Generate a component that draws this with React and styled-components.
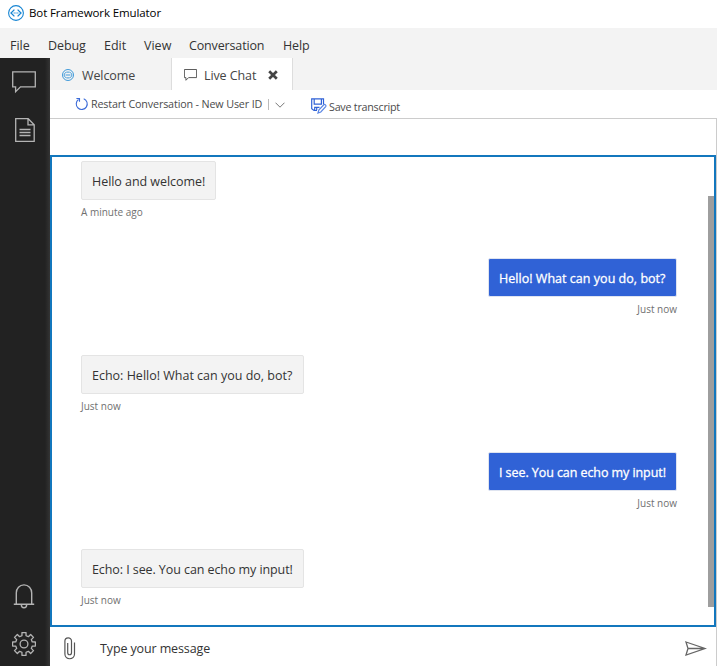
import React from "react";
import styled, { createGlobalStyle } from "styled-components";

const Global = createGlobalStyle`
  * { box-sizing: border-box; }
  html, body, #root { margin: 0; height: 100%; }
  body { font-family: "Open Sans", "Noto Sans", sans-serif; background: #fff; overflow: hidden; }
  svg { display: block; flex: none; }
`;

const Window = styled.div`
  width: 717px;
  height: 666px;
  display: flex;
  flex-direction: column;
  background: #fff;
`;

const Text = styled.span`
  font-size: ${(p) => p.$size || 12.5}px;
  letter-spacing: ${(p) => p.$track || 0}px;
  line-height: 18px;
  white-space: nowrap;
`;

const TitleBar = styled.header`
  height: 28px;
  flex: none;
  display: flex;
  align-items: center;
  gap: 5px;
  padding: 0 0 3px 8px;
  color: #000;
`;

const MenuBar = styled.nav`
  height: 30px;
  flex: none;
  display: flex;
  background: #f3f3f3;
  color: #333;
  padding: 9px 0 0 10px;
`;

const MenuItem = styled(Text)`
  width: ${(p) => p.$width}px;
`;

const Body = styled.div`
  flex: 1;
  display: flex;
  min-height: 0;
`;

const SideBar = styled.aside`
  width: 50px;
  flex: none;
  display: flex;
  flex-direction: column;
  align-items: center;
  padding: 12px 2px 10px 0;
  background: linear-gradient(to right, #222 45px, #343434 50px);
`;

const Spacer = styled.div`
  flex: 1;
`;

const SideButton = styled.div`
  height: 24px;
  margin-bottom: ${(p) => p.$gap || 0}px;
  padding-left: ${(p) => p.$nudge || 0}px;
`;

const Main = styled.main`
  flex: 1;
  display: flex;
  flex-direction: column;
`;

const Tabs = styled.div`
  height: 32px;
  flex: none;
  display: flex;
  background: #f3f3f3;
  color: #444;
`;

const Tab = styled.div`
  width: ${(p) => p.$width}px;
  display: flex;
  align-items: center;
  padding: 2px 0 0 ${(p) => p.$pad}px;
  background: ${(p) => (p.$active ? "#fff" : "#f3f3f3")};
  border-right: 1px solid #ddd;
`;

const TabLabel = styled(Text)`
  margin: 2px 0 0 ${(p) => p.$left}px;
  width: ${(p) => p.$width}px;
`;

const ToolBar = styled.div`
  height: 28px;
  flex: none;
  display: flex;
  align-items: flex-start;
  color: #4b4b4b;
  padding: 5px 0 0 25px;
`;

const IconSlot = styled.div`
  flex: none;
  padding-top: ${(p) => p.$top}px;
`;

const RestartLabel = styled(Text)`
  flex: none;
  width: 177px;
  margin-left: 2px;
`;

const Divider = styled.div`
  width: 1px;
  height: 11px;
  flex: none;
  margin: 4px 6px 0 0;
  background: #bbb;
`;

const SaveButton = styled.div`
  display: flex;
  gap: 2px;
  margin: 3px 0 0 26px;
`;

const Panel = styled.section`
  flex: 1;
  display: flex;
  flex-direction: column;
  border-top: 1px solid #ccc;
  border-right: 1px solid #ccc;
  padding-top: 36px;
`;

const Transcript = styled.div`
  height: 472px;
  flex: none;
  display: flex;
  overflow: hidden;
  border: 2px solid #1377bd;
`;

const Messages = styled.div`
  flex: 1;
  display: flex;
  flex-direction: column;
  padding: 4px 31px 0 29px;
`;

const Message = styled.div`
  height: 97px;
  flex: none;
  display: flex;
  flex-direction: column;
  align-items: ${(p) => (p.$mine ? "flex-end" : "flex-start")};
`;

const Bubble = styled.div`
  width: ${(p) => p.$width}px;
  height: 39px;
  display: flex;
  align-items: center;
  padding: 2px 0 0 10px;
  border: 1px solid ${(p) => (p.$mine ? "#dfe4f0" : "#e4e4e4")};
  border-radius: 2px;
  background: ${(p) => (p.$mine ? "#3062d6" : "#f3f3f3")};
  color: ${(p) => (p.$mine ? "#fff" : "#333")};
  -webkit-text-stroke: ${(p) => (p.$mine ? "0.3px #fff" : "0")};
`;

const Time = styled(Text)`
  margin-top: 3px;
  color: #707070;
`;

const ScrollThumb = styled.div`
  width: 6px;
  height: 411px;
  margin-top: 39px;
  background: #9e9e9e;
`;

const Composer = styled.div`
  flex: 1;
  display: flex;
  align-items: center;
  padding: 4px 9px 0 14px;
  color: #333;
`;

const Placeholder = styled(Text)`
  flex: 1;
  margin-left: 24px;
`;

const Logo = ({ size }) => (
  <svg width={size} height={size} viewBox="0 0 16 16" fill="none" stroke="#1685d3">
    <circle cx="8" cy="8" r="7.4" strokeWidth="1.1" />
    <path d="M6.4 4.6 3 8l3.400 3.400M9.600 4.600 13 8l-3.400 3.400" strokeWidth="1.300" />
    <path d="M5.600 8h1.200M7.400 8h1.200M9.200 8h1.200" strokeWidth="1.200" />
  </svg>
);

const RingLogo = () => (
  <svg width="12" height="12" viewBox="0 0 12 12" fill="none" stroke="#2a8fd6">
    <circle cx="6" cy="6" r="5.500" strokeWidth=".9" />
    <path d="M4.300 3.100C3 3.700 2.400 4.800 2.100 6c.3 1.200.9 2.300 2.200 2.900M7.700 3.100c1.300.6 1.900 1.700 2.200 2.900-.3 1.200-.9 2.300-2.200 2.900M4.500 3.300q1.500-.6 3 0M4.500 8.700q1.500.6 3 0M3.600 6h4.800" strokeWidth=".9" />
  </svg>
);

const ChatIcon = ({ width, height, color, stroke }) => (
  <svg width={width} height={height} viewBox="0 0 24 22" fill="none" stroke={color} strokeWidth={stroke}>
    <path d="M.7.8h22.6v15H8.5L3.6 20.7v-4.9H.7z" />
  </svg>
);

const DocIcon = () => (
  <svg width="20" height="24" viewBox="0 0 20 24" fill="none" stroke="#b4b4b4" strokeWidth="1.3">
    <path d="M.7.7h12.5l6 6v16.6H.7zM13 .7v6.2h6.2M4.5 11.5h11M4.5 14.5h11M4.5 17.5h11" />
  </svg>
);

const BellIcon = () => (
  <svg width="22" height="26" viewBox="0 0 22 26" fill="none" stroke="#b4b4b4" strokeWidth="1.4">
    <path d="M.8 20.3h20.4M3.3 20V9C3.3 4.3 6.5.9 11 .9S18.700 4.300 18.700 9v11M8.300 20.500c0 4.400 5.400 4.400 5.400 0" />
  </svg>
);

const gear = (() => {
  const pts = [];
  for (let i = 0; i < 8; i++) {
    [[-14, 8.5], [-10, 11.6], [10, 11.6], [14, 8.5]].forEach(([d, r]) => {
      const a = ((i * 45 + d) * Math.PI) / 180;
      pts.push(`${(12 + r * Math.sin(a)).toFixed(2)},${(12 - r * Math.cos(a)).toFixed(2)}`);
    });
  }
  return pts.join(" ");
})();

const GearIcon = () => (
  <svg width="24" height="24" viewBox="0 0 24 24" fill="none" stroke="#b4b4b4" strokeWidth="1.3" strokeLinejoin="round">
    <polygon points={gear} />
    <circle cx="12" cy="12" r="3.9" />
  </svg>
);

const CloseIcon = () => (
  <svg width="10" height="10" viewBox="0 0 10 10" stroke="#444" strokeWidth="2.7">
    <path d="m1.200 1.200 7.600 7.600M8.800 1.200 1.200 8.800" />
  </svg>
);

const RestartIcon = () => (
  <svg width="14" height="14" viewBox="0 0 14 14" fill="none" stroke="#3b6bd8" strokeWidth="1.100">
    <path d="M8.700 1.800a5.500 5.500 0 1 1-5.200.7M1.400 1.500h3.100v3.200" />
  </svg>
);

const ChevronIcon = () => (
  <svg width="10" height="6" viewBox="0 0 10 6" fill="none" stroke="#777">
    <path d="m.5.7 4.500 4.500L9.500.7" />
  </svg>
);

const SaveIcon = () => (
  <svg width="16" height="16" viewBox="0 0 16 16" fill="none" stroke="#3062d6" strokeWidth="1.200">
    <path d="M6 12.500H3L.7 10.700V.8h11.800v5.800M3.200.8v5.400h7.200V.8M3.700 12.400V9.300h4.800M5.700 9.500v2.500" />
    <path d="m7 15 .8-3 5-5.200c1-.9 2.700.6 1.900 1.800L9.800 14z" stroke="#5b86e4" />
  </svg>
);

const ClipIcon = () => (
  <svg width="12" height="23" viewBox="0 0 12 23" fill="none" stroke="#555" strokeWidth="1.200">
    <path d="M3.700 6v9.500c0 3 3.800 3 3.800 0V4c0-4.300-6.600-4.300-6.600 0v13c0 6.300 9.600 6.300 9.600 0V5.500" />
  </svg>
);

const SendIcon = () => (
  <svg width="22" height="15" viewBox="0 0 22 15" fill="none" stroke="#666" strokeWidth="1.300">
    <path d="M1 1 20 7.500 1 14l2-6.500zM3 7.500h17" />
  </svg>
);

const menu = [
  ["File", 38, 0], ["Debug", 56, -0.1], ["Edit", 40, 0],
  ["View", 45, 0], ["Conversation", 94, -0.15], ["Help", 40, -0.15],
];

const messages = [
  { text: "Hello and welcome!", width: 135, track: -0.05, time: "A minute ago" },
  { text: "Hello! What can you do, bot?", width: 189, track: 0.03, time: "Just now", mine: true },
  { text: "Echo: Hello! What can you do, bot?", width: 223, track: 0, time: "Just now" },
  { text: "I see. You can echo my input!", width: 189, track: -0.07, time: "Just now", mine: true },
  { text: "Echo: I see. You can echo my input!", width: 223, track: -0.08, time: "Just now" },
];

export default function App() {
  return (
    <Window>
      <Global />
      <TitleBar>
        <Logo size={16} />
        <Text $size={11.5} $track={-0.1}>Bot Framework Emulator</Text>
      </TitleBar>
      <MenuBar>
        {menu.map(([label, width, track]) => (
          <MenuItem key={label} $width={width} $track={track}>{label}</MenuItem>
        ))}
      </MenuBar>
      <Body>
        <SideBar>
          <SideButton $gap={24}><ChatIcon width={24} height={24} color="#b4b4b4" stroke={1.3} /></SideButton>
          <SideButton $nudge={2}><DocIcon /></SideButton>
          <Spacer />
          <SideButton $gap={24}><BellIcon /></SideButton>
          <SideButton><GearIcon /></SideButton>
        </SideBar>
        <Main>
          <Tabs>
            <Tab $width={122} $pad={12}>
              <RingLogo />
              <TabLabel $left={8} $width={60} $track={-0.1}>Welcome</TabLabel>
            </Tab>
            <Tab $active $width={121} $pad={12}>
              <ChatIcon width={13} height={12} color="#555" stroke={1.8} />
              <TabLabel $left={7} $width={64} $track={-0.1}>Live Chat</TabLabel>
              <CloseIcon />
            </Tab>
          </Tabs>
          <ToolBar>
            <IconSlot $top={2}><RestartIcon /></IconSlot>
            <RestartLabel $size={10.75} $track={-0.15}>Restart Conversation - New User ID</RestartLabel>
            <Divider />
            <IconSlot $top={7}><ChevronIcon /></IconSlot>
            <SaveButton>
              <SaveIcon />
              <Text $size={10.75} $track={-0.25}>Save transcript</Text>
            </SaveButton>
          </ToolBar>
          <Panel>
            <Transcript>
              <Messages>
                {messages.map((m) => (
                  <Message key={m.text} $mine={m.mine}>
                    <Bubble $mine={m.mine} $width={m.width}>
                      <Text $track={m.track}>{m.text}</Text>
                    </Bubble>
                    <Time $size={10}>{m.time}</Time>
                  </Message>
                ))}
              </Messages>
              <ScrollThumb />
            </Transcript>
            <Composer>
              <ClipIcon />
              <Placeholder $track={-0.12}>Type your message</Placeholder>
              <SendIcon />
            </Composer>
          </Panel>
        </Main>
      </Body>
    </Window>
  );
}
